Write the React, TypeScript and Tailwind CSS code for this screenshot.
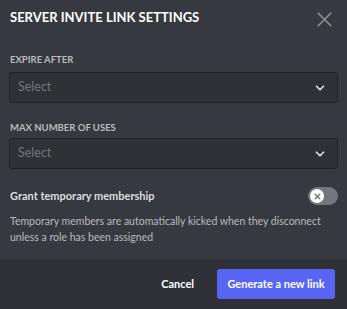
import { ChevronDown, X } from "lucide-react";

const SelectBox = () => (
  <div className="flex h-[31px] items-center justify-between rounded-[3px] border border-[#202225] bg-[#2f3136] pl-[8px] pr-[10px]">
    <span className="text-[12.5px] text-[#72767d]">Select</span>
    <ChevronDown size={14} strokeWidth={3} className="text-[#dcddde]" />
  </div>
);

const App = () => {
  return (
    <div className="flex h-[309px] w-[347px] flex-col bg-[#36393f] font-['Lato',sans-serif]">
      <div className="flex-1 px-[9px]">
        <div className="mt-[10px] flex h-[20px] items-start justify-between">
          <h2 className="pl-[1px] text-[13px] font-bold uppercase leading-[14px] text-white">
            Server Invite Link Settings
          </h2>
          <X size={25} strokeWidth={1.6} className="-mt-[3px] mr-[1px] shrink-0 text-[#8e9297]" />
        </div>

        <p className="mt-[24px] pl-[1px] text-[9.5px] font-bold uppercase leading-[12px] text-[#b9bbbe]">
          Expire After
        </p>
        <div className="mt-[6px]">
          <SelectBox />
        </div>

        <p className="mt-[19px] pl-[1px] text-[9.5px] font-bold uppercase leading-[12px] text-[#b9bbbe]">
          Max Number of Uses
        </p>
        <div className="mt-[4px]">
          <SelectBox />
        </div>

        <div className="mt-[18px] flex items-center justify-between pl-[1px]">
          <span className="text-[11px] font-bold text-[#dcddde]">
            Grant temporary membership
          </span>
          <div className="flex h-[18px] w-[30px] items-center rounded-full bg-[#72767d] px-[2px]">
            <div className="flex h-[14px] w-[14px] items-center justify-center rounded-full bg-white">
              <X size={9} strokeWidth={4} className="text-[#72767d]" />
            </div>
          </div>
        </div>

        <p className="mt-[8px] pl-[1px] text-[10.5px] leading-[16px] text-[#b9bbbe]">
          Temporary members are automatically kicked when they disconnect unless a
          role has been assigned
        </p>
      </div>

      <div className="flex h-[50px] items-center justify-end gap-[23px] bg-[#2f3136] pr-[12px]">
        <button className="text-[11px] font-bold text-white">Cancel</button>
        <button className="h-[30px] w-[118px] rounded-[3px] bg-[#5865f2] text-[11px] font-bold text-white">
          Generate a new link
        </button>
      </div>
    </div>
  );
};

export default App;
